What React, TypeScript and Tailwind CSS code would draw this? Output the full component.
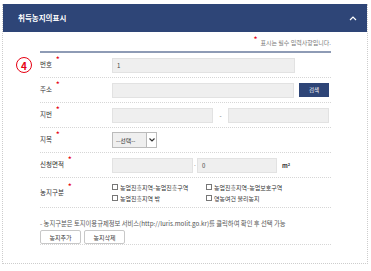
import React from "react";

const font = { fontFamily: '"Noto Sans CJK KR", "Noto Sans", sans-serif' };

const Star = () => (
  <span className="relative -top-[6px] ml-[4px] text-[7px] font-bold leading-none text-[#e60012]">*</span>
);

const Label = ({ text }: { text: string }) => (
  <div className="flex w-[72px] shrink-0 items-center text-[6.5px] text-[#333]">
    <span>{text}</span>
    <Star />
  </div>
);

const Field = ({ w, value }: { w: string; value?: string }) => (
  <div className={`${w} flex h-[15px] items-center border border-[#e2e2e2] bg-[#efefef] pl-[4px] text-[6px] text-[#444]`}>
    {value}
  </div>
);

const Check = ({ text }: { text: string }) => (
  <div className="flex items-center gap-[2px] text-[6px] leading-[11px] text-[#333]">
    <span className="h-[6px] w-[6px] border border-[#777] bg-white" />
    <span>{text}</span>
  </div>
);

export default function App() {
  return (
    <div className="h-[271px] w-[371px] bg-white pl-[2px] pt-[4px]" style={font}>
      <div className="h-[260px] w-[366px] border-x border-b border-dotted border-[#cdcdcd]">
        <div className="flex h-[28px] items-center justify-between bg-[#2e4577] pl-[15px] pr-[10px]">
          <span className="text-[7.5px] font-bold text-white">취득농지의표시</span>
          <svg width="8" height="5" viewBox="0 0 8 5">
            <polyline points="1,4 4,1 7,4" fill="none" stroke="#fff" strokeWidth="1.2" />
          </svg>
        </div>
        <div className="relative pl-[37px] pr-[36px]">
          <div className="absolute left-[13px] top-[25px] flex h-[16px] w-[16px] items-center justify-center rounded-full border-[1.5px] border-[#e60012] text-[10px] font-bold text-[#e60012]">
            4
          </div>
          <div className="flex h-[19px] items-center justify-end pt-[1px] text-[6px] text-[#777]">
            <span className="relative -top-[3px] mr-[3px] text-[7px] font-bold leading-none text-[#e60012]">*</span>
            표시는 필수 입력사항입니다.
          </div>
          <div className="h-[2px] bg-[#8e9bb5]" />

          <div className="flex h-[25px] items-center border-b border-dotted border-[#d6d6d6]">
            <Label text="번호" />
            <Field w="w-[183px]" value="1" />
          </div>

          <div className="flex h-[25px] items-center border-b border-dotted border-[#d6d6d6]">
            <Label text="주소" />
            <Field w="w-[182px]" />
            <button className="ml-[5px] h-[14px] w-[30px] bg-[#2e4577] text-[5.5px] text-white">검색</button>
          </div>

          <div className="flex h-[25px] items-center border-b border-dotted border-[#d6d6d6]">
            <Label text="지번" />
            <Field w="w-[101px]" />
            <span className="w-[15px] text-center text-[6px] text-[#555]">-</span>
            <Field w="w-[101px]" />
          </div>

          <div className="flex h-[25px] items-center border-b border-dotted border-[#d6d6d6]">
            <Label text="지목" />
            <div className="flex h-[16px] w-[45px] items-center justify-between border border-[#bbb] bg-[#efefef] pl-[3px] text-[6px] text-[#333]">
              <span>--선택--</span>
              <span className="flex h-full w-[10px] items-center justify-center border-l border-[#bbb] bg-white">
                <svg width="6" height="4" viewBox="0 0 6 4">
                  <polyline points="0.5,0.5 3,3 5.5,0.5" fill="none" stroke="#333" strokeWidth="1.2" />
                </svg>
              </span>
            </div>
          </div>

          <div className="flex h-[25px] items-center border-b border-dotted border-[#d6d6d6]">
            <Label text="신청면적" />
            <Field w="w-[81px]" />
            <span className="w-[4px] text-center text-[6px] text-[#555]">·</span>
            <Field w="w-[80px]" value="0" />
            <span className="ml-[5px] text-[6px] font-bold text-[#333]">
              m<sup className="text-[4px]">2</sup>
            </span>
          </div>

          <div className="flex h-[30px] items-center border-b border-dotted border-[#d6d6d6]">
            <Label text="농지구분" />
            <div className="grid grid-cols-[94px_auto]">
              <Check text="농업진흥지역-농업진흥구역" />
              <Check text="농업진흥지역-농업보호구역" />
              <Check text="농업진흥지역 밖" />
              <Check text="영농여건 불리농지" />
            </div>
          </div>

          <div className="mt-[12px] text-[6.3px] leading-[8px] text-[#555]">
            - 농지구분은 토지이용규제정보 서비스(http://luris.molit.go.kr)를 클릭하여 확인 후 선택 가능
          </div>
          <div className="mt-[2px] flex h-[15px] gap-[3px] border-b border-dotted border-[#d6d6d6]">
            <button className="h-[14px] w-[41px] rounded-[2px] border border-[#c8c8c8] bg-white text-[6px] text-[#333]">농지추가</button>
            <button className="h-[14px] w-[41px] rounded-[2px] border border-[#c8c8c8] bg-white text-[6px] text-[#333]">농지삭제</button>
          </div>
        </div>
      </div>
    </div>
  );
}
